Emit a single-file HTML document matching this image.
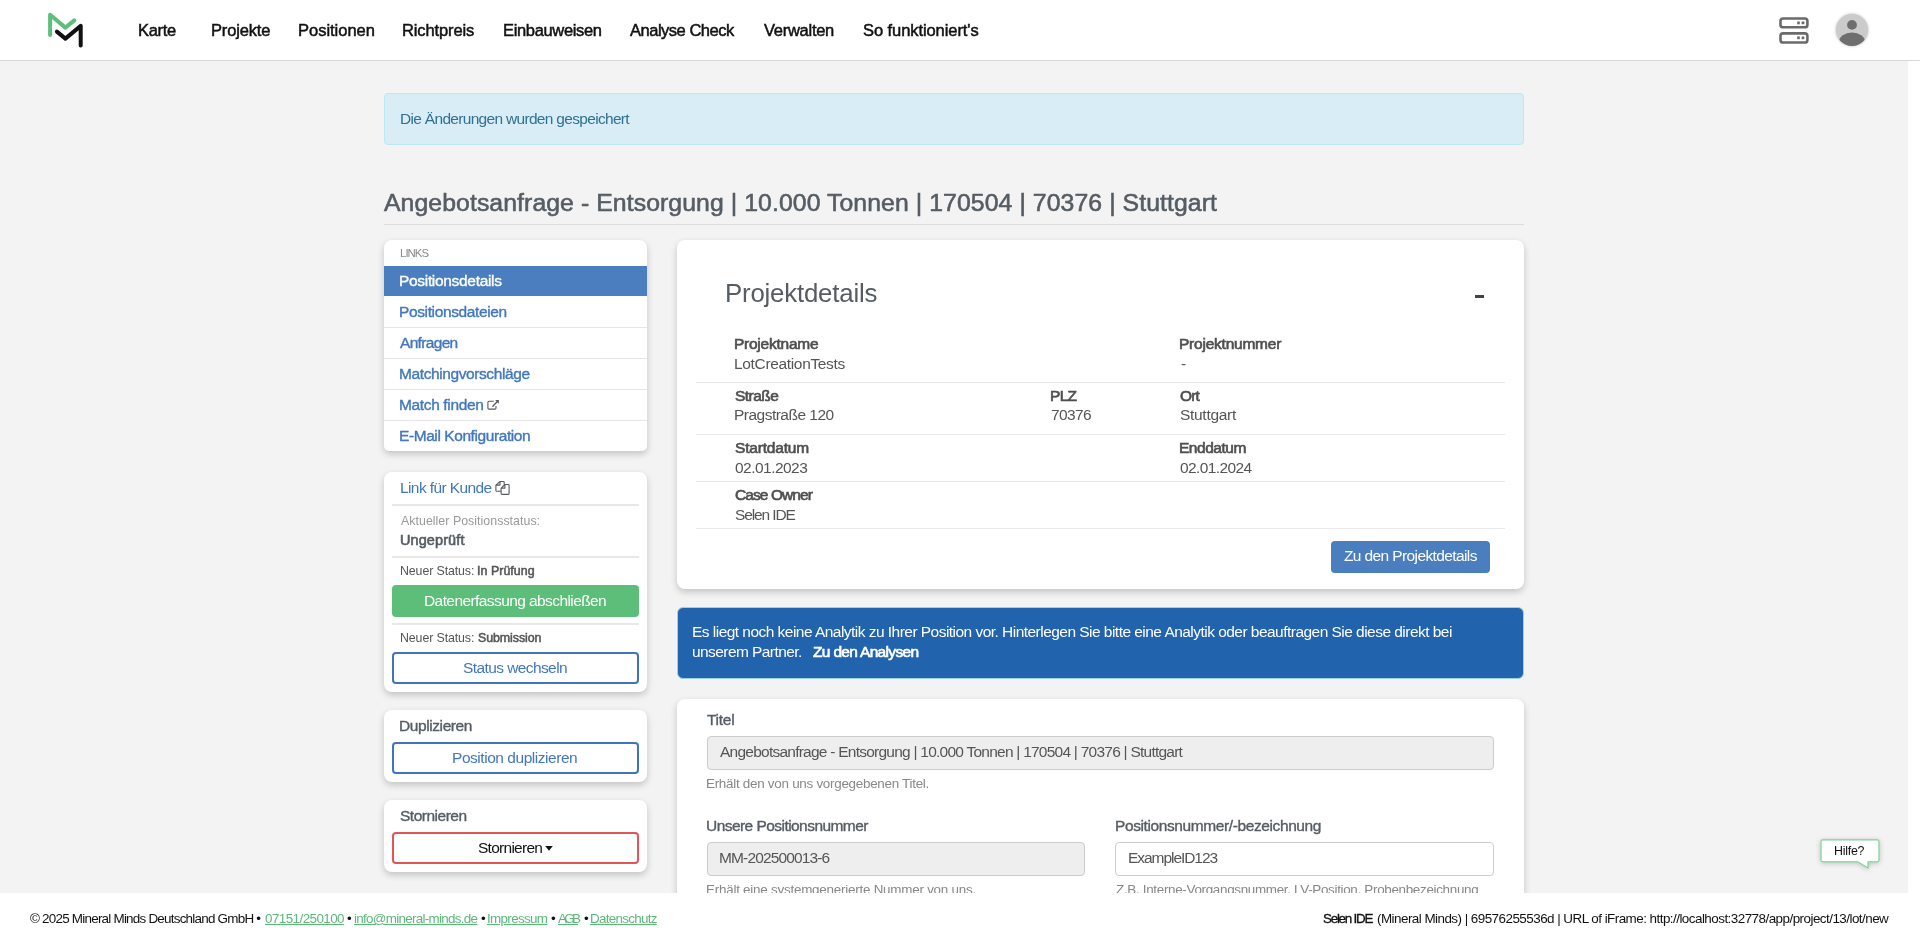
<!DOCTYPE html>
<html><head><meta charset="utf-8"><title>Position</title>
<style>
html,body{margin:0;padding:0;}
body{width:1920px;height:943px;overflow:hidden;position:relative;background:#fff;font-family:'Liberation Sans',sans-serif;}
.a{position:absolute;box-sizing:border-box;}
.t{position:absolute;white-space:nowrap;line-height:1;font-family:"Liberation Sans",sans-serif;will-change:transform;}
.card{position:absolute;background:#fff;border-radius:8px;box-shadow:0 3px 7px rgba(0,0,0,.2);}
.sep{position:absolute;height:1px;background:#e6e6e6;}
</style></head><body>
<!-- page background -->
<div class="a" style="left:0;top:61px;width:1908px;height:832px;background:#f3f3f3"></div>
<!-- header -->
<div class="a" style="left:0;top:0;width:1920px;height:60px;background:#fff"></div>
<div class="a" style="left:0;top:60px;width:1920px;height:1px;background:#d8d8d8"></div>
<svg class="a" style="left:40px;top:5px" width="50" height="50" viewBox="40 5 50 50">
  <polyline points="50.1,34.9 50.1,14.7 65.4,27.6 74.3,20.4" fill="none" stroke="#5dbf7b" stroke-width="4" stroke-linecap="round" stroke-linejoin="round"/>
  <polyline points="56.9,31.6 65.4,38.6 80.7,25.9 80.7,45.6" fill="none" stroke="#111" stroke-width="4" stroke-linecap="round" stroke-linejoin="round"/>
</svg>
<!-- server icon -->
<svg class="a" style="left:1775px;top:12px" width="40" height="36" viewBox="1775 12 40 36">
  <rect x="1780.5" y="18.5" width="26.9" height="8.8" rx="2.6" fill="none" stroke="#6b6b6b" stroke-width="2.6"/>
  <rect x="1780.5" y="33.4" width="26.9" height="9.1" rx="2.6" fill="none" stroke="#6b6b6b" stroke-width="2.6"/>
  <rect x="1797.2" y="21.5" width="2.6" height="2.8" fill="#6b6b6b"/>
  <rect x="1801.6" y="21.5" width="2.8" height="2.8" rx=".6" fill="#6b6b6b"/>
  <rect x="1797.2" y="36.4" width="2.6" height="2.8" fill="#6b6b6b"/>
  <rect x="1801.6" y="36.4" width="2.8" height="2.8" rx=".6" fill="#6b6b6b"/>
</svg>
<!-- avatar -->
<div class="a" style="left:1836px;top:14px;width:32px;height:32px;border-radius:50%;box-shadow:0 0 3px rgba(0,0,0,.3);overflow:hidden;background:#cbcbcb">
  <svg width="32" height="32" viewBox="1836 14 32 32" style="display:block">
    <circle cx="1852" cy="24.9" r="4.9" fill="#6e6e6e"/>
    <ellipse cx="1852" cy="41.5" rx="13" ry="9" fill="#6e6e6e"/>
  </svg>
</div>

<!-- alert -->
<div class="a" style="left:384px;top:93px;width:1140px;height:52px;background:#d9edf7;border:1px solid #bce8f1;border-radius:4px"></div>
<!-- title line -->
<div class="a" style="left:384px;top:224px;width:1140px;height:1px;background:#dcdcdc"></div>

<!-- links card -->
<div class="card" style="left:384px;top:240px;width:263px;height:211px;border-radius:8px 8px 5px 5px"></div>
<div class="a" style="left:384px;top:266px;width:263px;height:30px;background:#4a7ebe"></div>
<div class="sep" style="left:384px;top:327px;width:263px"></div>
<div class="sep" style="left:384px;top:358px;width:263px"></div>
<div class="sep" style="left:384px;top:389px;width:263px"></div>
<div class="sep" style="left:384px;top:420px;width:263px"></div>
<svg class="a" style="left:485px;top:398px" width="16" height="14" viewBox="485 398 16 14">
  <path d="M493.8,401.2 H489 Q487.9,401.2 487.9,402.3 V408 Q487.9,409.1 489,409.1 H494.9 Q496,409.1 496,408 V406" fill="none" stroke="#555b61" stroke-width="1.1"/>
  <path d="M492.8,406.2 L497.6,401.2" fill="none" stroke="#555b61" stroke-width="1.3" stroke-linecap="round"/>
  <path d="M495.2,400 L498.9,399.9 L498.7,403.7 Z" fill="#555b61"/>
</svg>

<!-- status card -->
<div class="card" style="left:384px;top:472px;width:263px;height:220px"></div>
<svg class="a" style="left:493px;top:479px" width="20" height="18" viewBox="493 479 20 18">
  <path d="M500,481.5 H503.3 Q504.2,481.5 504.2,482.4 V484.5 M500,481.5 L495.9,485.1 V490.4 Q495.9,491.3 496.8,491.3 H501 M500,481.5 V485.1 H495.9" fill="none" stroke="#555b61" stroke-width="1.1" stroke-linejoin="round"/>
  <path d="M504.9,484.5 H508.2 Q509.1,484.5 509.1,485.4 V493.5 Q509.1,494.4 508.2,494.4 H502 Q501.1,494.4 501.1,493.5 V488.1 L504.9,484.5 V488.1 H501.1" fill="#fff" stroke="#555b61" stroke-width="1.1" stroke-linejoin="round"/>
</svg>
<div class="a" style="left:392px;top:504px;width:247px;height:2px;background:#e8e8e8"></div>
<div class="a" style="left:392px;top:556px;width:247px;height:2px;background:#e8e8e8"></div>
<div class="a" style="left:392px;top:585px;width:247px;height:32px;background:#5cbe78;border-radius:4px"></div>
<div class="a" style="left:392px;top:623px;width:247px;height:2px;background:#e8e8e8"></div>
<div class="a" style="left:392px;top:652px;width:247px;height:32px;border:2px solid #3f74bf;border-radius:4px;background:#fff"></div>

<!-- dup card -->
<div class="card" style="left:384px;top:710px;width:263px;height:72px"></div>
<div class="a" style="left:392px;top:742px;width:247px;height:32px;border:2px solid #3f74bf;border-radius:4px;background:#fff"></div>
<!-- storno card -->
<div class="card" style="left:384px;top:800px;width:263px;height:72px"></div>
<div class="a" style="left:392px;top:832px;width:247px;height:32px;border:2px solid #e25555;border-radius:4px;background:#fff"></div>
<svg class="a" style="left:544px;top:845px" width="10" height="7" viewBox="544 845 10 7"><path d="M545.2,846 H552.8 L549,850.8 Z" fill="#111"/></svg>

<!-- projektdetails card -->
<div class="card" style="left:677px;top:240px;width:847px;height:349px"></div>
<div class="a" style="left:1475px;top:295px;width:8.5px;height:3px;background:#444"></div>
<div class="sep" style="left:696px;top:382px;width:809px;background:#e8e8e8"></div>
<div class="sep" style="left:696px;top:434px;width:809px;background:#e8e8e8"></div>
<div class="sep" style="left:696px;top:481px;width:809px;background:#e8e8e8"></div>
<div class="sep" style="left:696px;top:528px;width:809px;background:#e8e8e8"></div>
<div class="a" style="left:1331px;top:541px;width:159px;height:32px;background:#4a7ebe;border-radius:4px"></div>

<!-- blue alert -->
<div class="a" style="left:677px;top:607px;width:847px;height:72px;background:#2263ad;border:1px solid #9fd0ea;border-radius:6px"></div>

<!-- form card -->
<div class="card" style="left:677px;top:699px;width:847px;height:260px"></div>
<div class="a" style="left:707px;top:736px;width:787px;height:34px;background:#eee;border:1px solid #ccc;border-radius:4px"></div>
<div class="a" style="left:707px;top:842px;width:378px;height:34px;background:#eee;border:1px solid #ccc;border-radius:4px"></div>
<div class="a" style="left:1115px;top:842px;width:379px;height:34px;background:#fff;border:1px solid #ccc;border-radius:4px"></div>

<!-- hilfe bubble -->
<svg class="a" style="left:1810px;top:830px;overflow:visible" width="80" height="45" viewBox="1810 830 80 45">
  <defs><filter id="sh" x="-30%" y="-50%" width="160%" height="200%"><feDropShadow dx="0" dy="1" stdDeviation="2.5" flood-color="#000" flood-opacity=".22"/></filter></defs>
  <path d="M1822.8,839.8 H1877.2 Q1879,839.8 1879,841.6 V860 Q1879,861.8 1877.2,861.8 H1868 V868 L1857.7,861.8 H1822.8 Q1821,861.8 1821,860 V841.6 Q1821,839.8 1822.8,839.8 Z" fill="#fff" stroke="#7fcf97" stroke-width="1.2" filter="url(#sh)"/>
</svg>

<!-- footer -->
<div class="a" style="left:0;top:893px;width:1920px;height:50px;background:#fff;z-index:5"></div>

<div class="t" style="left:137.75px;top:23.31px;font-size:16.53px;font-weight:normal;color:#111;-webkit-text-stroke:0.40px #111;letter-spacing:-0.310px;-webkit-text-stroke:0.5px #111">Karte</div>
<div class="t" style="left:210.70px;top:23.31px;font-size:16.53px;font-weight:normal;color:#111;-webkit-text-stroke:0.40px #111;letter-spacing:-0.157px;-webkit-text-stroke:0.5px #111">Projekte</div>
<div class="t" style="left:297.90px;top:23.31px;font-size:16.53px;font-weight:normal;color:#111;-webkit-text-stroke:0.40px #111;letter-spacing:-0.027px;-webkit-text-stroke:0.5px #111">Positionen</div>
<div class="t" style="left:402.40px;top:23.31px;font-size:16.53px;font-weight:normal;color:#111;-webkit-text-stroke:0.40px #111;letter-spacing:-0.130px;-webkit-text-stroke:0.5px #111">Richtpreis</div>
<div class="t" style="left:502.60px;top:23.31px;font-size:16.53px;font-weight:normal;color:#111;-webkit-text-stroke:0.40px #111;letter-spacing:-0.350px;-webkit-text-stroke:0.5px #111">Einbauweisen</div>
<div class="t" style="left:630.00px;top:23.31px;font-size:16.53px;font-weight:normal;color:#111;-webkit-text-stroke:0.40px #111;letter-spacing:-0.492px;-webkit-text-stroke:0.5px #111">Analyse Check</div>
<div class="t" style="left:764.20px;top:23.31px;font-size:16.53px;font-weight:normal;color:#111;-webkit-text-stroke:0.40px #111;letter-spacing:-0.281px;-webkit-text-stroke:0.5px #111">Verwalten</div>
<div class="t" style="left:863.40px;top:23.31px;font-size:16.53px;font-weight:normal;color:#111;-webkit-text-stroke:0.40px #111;letter-spacing:-0.083px;-webkit-text-stroke:0.5px #111">So funktioniert's</div>
<div class="t" style="left:399.70px;top:111.19px;font-size:15.49px;font-weight:normal;color:#31708f;letter-spacing:-0.680px;">Die Änderungen wurden gespeichert</div>
<div class="t" style="left:384.30px;top:191.32px;font-size:24.79px;font-weight:normal;color:#555c63;-webkit-text-stroke:0.59px #555c63;letter-spacing:0.080px;">Angebotsanfrage - Entsorgung | 10.000 Tonnen | 170504 | 70376 | Stuttgart</div>
<div class="t" style="left:399.80px;top:247.68px;font-size:11.36px;font-weight:normal;color:#888;letter-spacing:-0.938px;">LINKS</div>
<div class="t" style="left:398.50px;top:273.19px;font-size:15.49px;font-weight:normal;color:#fff;-webkit-text-stroke:0.37px #fff;letter-spacing:-0.310px;">Positionsdetails</div>
<div class="t" style="left:398.50px;top:304.19px;font-size:15.49px;font-weight:normal;color:#4177bf;-webkit-text-stroke:0.37px #4177bf;letter-spacing:-0.361px;">Positionsdateien</div>
<div class="t" style="left:399.50px;top:335.19px;font-size:15.49px;font-weight:normal;color:#4177bf;-webkit-text-stroke:0.37px #4177bf;letter-spacing:-0.662px;">Anfragen</div>
<div class="t" style="left:398.50px;top:366.19px;font-size:15.49px;font-weight:normal;color:#4177bf;-webkit-text-stroke:0.37px #4177bf;letter-spacing:-0.394px;">Matchingvorschläge</div>
<div class="t" style="left:398.50px;top:397.19px;font-size:15.49px;font-weight:normal;color:#4177bf;-webkit-text-stroke:0.37px #4177bf;letter-spacing:-0.350px;">Match finden</div>
<div class="t" style="left:398.50px;top:428.19px;font-size:15.49px;font-weight:normal;color:#4177bf;-webkit-text-stroke:0.37px #4177bf;letter-spacing:-0.411px;">E-Mail Konfiguration</div>
<div class="t" style="left:399.60px;top:480.19px;font-size:15.49px;font-weight:normal;color:#4177bf;letter-spacing:-0.596px;">Link für Kunde</div>
<div class="t" style="left:400.60px;top:514.80px;font-size:12.4px;font-weight:normal;color:#999;letter-spacing:0.025px;">Aktueller Positionsstatus:</div>
<div class="t" style="left:399.60px;top:533.06px;font-size:14.46px;font-weight:normal;color:#555c63;-webkit-text-stroke:0.61px #555c63;letter-spacing:0.118px;">Ungeprüft</div>
<div class="t" style="left:399.60px;top:564.80px;font-size:12.4px;font-weight:normal;color:#555;letter-spacing:-0.118px;">Neuer Status:</div>
<div class="t" style="left:476.50px;top:564.80px;font-size:12.4px;font-weight:normal;color:#555;-webkit-text-stroke:0.52px #555;letter-spacing:0.046px;">In Prüfung</div>
<div class="t" style="left:423.50px;top:593.19px;font-size:15.49px;font-weight:normal;color:#fff;letter-spacing:-0.576px;">Datenerfassung abschließen</div>
<div class="t" style="left:399.60px;top:631.80px;font-size:12.4px;font-weight:normal;color:#555;letter-spacing:-0.118px;">Neuer Status:</div>
<div class="t" style="left:477.50px;top:631.80px;font-size:12.4px;font-weight:normal;color:#555;-webkit-text-stroke:0.52px #555;letter-spacing:-0.073px;">Submission</div>
<div class="t" style="left:463.10px;top:660.19px;font-size:15.49px;font-weight:normal;color:#4177bf;letter-spacing:-0.582px;">Status wechseln</div>
<div class="t" style="left:399.40px;top:718.19px;font-size:15.49px;font-weight:normal;color:#555c63;-webkit-text-stroke:0.37px #555c63;letter-spacing:-0.405px;">Duplizieren</div>
<div class="t" style="left:452.10px;top:750.19px;font-size:15.49px;font-weight:normal;color:#4177bf;letter-spacing:-0.451px;">Position duplizieren</div>
<div class="t" style="left:400.40px;top:808.19px;font-size:15.49px;font-weight:normal;color:#555c63;-webkit-text-stroke:0.37px #555c63;letter-spacing:-0.481px;">Stornieren</div>
<div class="t" style="left:478.00px;top:840.19px;font-size:15.49px;font-weight:normal;color:#111;letter-spacing:-0.726px;">Stornieren</div>
<div class="t" style="left:724.50px;top:281.44px;font-size:25.82px;font-weight:normal;color:#555c63;letter-spacing:-0.196px;">Projektdetails</div>
<div class="t" style="left:733.80px;top:336.19px;font-size:15.49px;font-weight:normal;color:#4f4f4f;-webkit-text-stroke:0.65px #4f4f4f;letter-spacing:-0.241px;">Projektname</div>
<div class="t" style="left:733.80px;top:356.19px;font-size:15.49px;font-weight:normal;color:#555;letter-spacing:-0.330px;">LotCreationTests</div>
<div class="t" style="left:1179.30px;top:336.19px;font-size:15.49px;font-weight:normal;color:#4f4f4f;-webkit-text-stroke:0.65px #4f4f4f;letter-spacing:-0.219px;">Projektnummer</div>
<div class="t" style="left:1180.50px;top:356.19px;font-size:15.49px;font-weight:normal;color:#555;">-</div>
<div class="t" style="left:734.80px;top:388.19px;font-size:15.49px;font-weight:normal;color:#4f4f4f;-webkit-text-stroke:0.65px #4f4f4f;letter-spacing:-0.531px;">Straße</div>
<div class="t" style="left:733.80px;top:407.19px;font-size:15.49px;font-weight:normal;color:#555;letter-spacing:-0.509px;">Pragstraße 120</div>
<div class="t" style="left:1049.50px;top:388.19px;font-size:15.49px;font-weight:normal;color:#4f4f4f;-webkit-text-stroke:0.65px #4f4f4f;letter-spacing:-0.670px;">PLZ</div>
<div class="t" style="left:1050.50px;top:407.19px;font-size:15.49px;font-weight:normal;color:#555;letter-spacing:-0.637px;">70376</div>
<div class="t" style="left:1180.30px;top:388.19px;font-size:15.49px;font-weight:normal;color:#4f4f4f;-webkit-text-stroke:0.65px #4f4f4f;letter-spacing:-0.900px;">Ort</div>
<div class="t" style="left:1180.30px;top:407.19px;font-size:15.49px;font-weight:normal;color:#555;letter-spacing:-0.291px;">Stuttgart</div>
<div class="t" style="left:734.80px;top:440.19px;font-size:15.49px;font-weight:normal;color:#4f4f4f;-webkit-text-stroke:0.65px #4f4f4f;letter-spacing:-0.171px;">Startdatum</div>
<div class="t" style="left:734.80px;top:460.19px;font-size:15.49px;font-weight:normal;color:#555;letter-spacing:-0.521px;">02.01.2023</div>
<div class="t" style="left:1179.30px;top:440.19px;font-size:15.49px;font-weight:normal;color:#4f4f4f;-webkit-text-stroke:0.65px #4f4f4f;letter-spacing:-0.455px;">Enddatum</div>
<div class="t" style="left:1180.30px;top:460.19px;font-size:15.49px;font-weight:normal;color:#555;letter-spacing:-0.587px;">02.01.2024</div>
<div class="t" style="left:734.80px;top:487.19px;font-size:15.49px;font-weight:normal;color:#4f4f4f;-webkit-text-stroke:0.65px #4f4f4f;letter-spacing:-0.911px;">Case Owner</div>
<div class="t" style="left:734.80px;top:507.19px;font-size:15.49px;font-weight:normal;color:#555;letter-spacing:-1.099px;">Selen IDE</div>
<div class="t" style="left:1343.60px;top:548.19px;font-size:15.49px;font-weight:normal;color:#fff;letter-spacing:-0.601px;">Zu den Projektdetails</div>
<div class="t" style="left:691.70px;top:624.19px;font-size:15.49px;font-weight:normal;color:#fff;letter-spacing:-0.525px;">Es liegt noch keine Analytik zu Ihrer Position vor. Hinterlegen Sie bitte eine Analytik oder beauftragen Sie diese direkt bei</div>
<div class="t" style="left:691.70px;top:644.19px;font-size:15.49px;font-weight:normal;color:#fff;letter-spacing:-0.565px;">unserem Partner.</div>
<div class="t" style="left:812.90px;top:644.19px;font-size:15.49px;font-weight:normal;color:#fff;-webkit-text-stroke:0.65px #fff;letter-spacing:-0.664px;">Zu den Analysen</div>
<div class="t" style="left:707.20px;top:712.19px;font-size:15.49px;font-weight:normal;color:#555c63;-webkit-text-stroke:0.37px #555c63;letter-spacing:-0.259px;">Titel</div>
<div class="t" style="left:720.10px;top:744.19px;font-size:15.49px;font-weight:normal;color:#555;letter-spacing:-0.749px;">Angebotsanfrage - Entsorgung | 10.000 Tonnen | 170504 | 70376 | Stuttgart</div>
<div class="t" style="left:706.20px;top:776.93px;font-size:13.43px;font-weight:normal;color:#888;letter-spacing:-0.277px;">Erhält den von uns vorgegebenen Titel.</div>
<div class="t" style="left:706.00px;top:818.19px;font-size:15.49px;font-weight:normal;color:#555c63;-webkit-text-stroke:0.37px #555c63;letter-spacing:-0.542px;">Unsere Positionsnummer</div>
<div class="t" style="left:719.00px;top:850.19px;font-size:15.49px;font-weight:normal;color:#555;letter-spacing:-0.847px;">MM-202500013-6</div>
<div class="t" style="left:706.00px;top:882.93px;font-size:13.43px;font-weight:normal;color:#888;letter-spacing:-0.239px;">Erhält eine systemgenerierte Nummer von uns.</div>
<div class="t" style="left:1114.80px;top:818.19px;font-size:15.49px;font-weight:normal;color:#555c63;-webkit-text-stroke:0.37px #555c63;letter-spacing:-0.388px;">Positionsnummer/-bezeichnung</div>
<div class="t" style="left:1128.00px;top:850.19px;font-size:15.49px;font-weight:normal;color:#555;letter-spacing:-1.041px;">ExampleID123</div>
<div class="t" style="left:1115.80px;top:882.93px;font-size:13.43px;font-weight:normal;color:#888;letter-spacing:-0.316px;">Z.B. Interne-Vorgangsnummer, LV-Position, Probenbezeichnung</div>
<div class="t" style="left:1834.30px;top:844.80px;font-size:12.4px;font-weight:normal;color:#111;letter-spacing:-0.237px;">Hilfe?</div>
<div class="t" style="left:29.90px;top:911.93px;font-size:13.43px;font-weight:normal;color:#111;letter-spacing:-0.764px;z-index:6">© 2025 Mineral Minds Deutschland GmbH •</div>
<div class="t" style="left:264.70px;top:911.93px;font-size:13.43px;font-weight:normal;color:#5cb878;letter-spacing:-0.570px;text-decoration:underline;z-index:6">07151/250100</div>
<div class="t" style="left:347.00px;top:911.93px;font-size:13.43px;font-weight:normal;color:#111;z-index:6">•</div>
<div class="t" style="left:354.00px;top:911.93px;font-size:13.43px;font-weight:normal;color:#5cb878;letter-spacing:-0.707px;text-decoration:underline;z-index:6">info@mineral-minds.de</div>
<div class="t" style="left:481.00px;top:911.93px;font-size:13.43px;font-weight:normal;color:#111;z-index:6">•</div>
<div class="t" style="left:486.80px;top:911.93px;font-size:13.43px;font-weight:normal;color:#5cb878;letter-spacing:-0.674px;text-decoration:underline;z-index:6">Impressum</div>
<div class="t" style="left:551.00px;top:911.93px;font-size:13.43px;font-weight:normal;color:#111;z-index:6">•</div>
<div class="t" style="left:557.80px;top:911.93px;font-size:13.43px;font-weight:normal;color:#5cb878;letter-spacing:-2.746px;text-decoration:underline;z-index:6">AGB</div>
<div class="t" style="left:584.00px;top:911.93px;font-size:13.43px;font-weight:normal;color:#111;z-index:6">•</div>
<div class="t" style="left:590.30px;top:911.93px;font-size:13.43px;font-weight:normal;color:#5cb878;letter-spacing:-0.720px;text-decoration:underline;z-index:6">Datenschutz</div>
<div class="t" style="left:1323.20px;top:911.93px;font-size:13.43px;font-weight:normal;color:#111;-webkit-text-stroke:0.32px #111;letter-spacing:-1.260px;z-index:6">Selen IDE</div>
<div class="t" style="left:1377.00px;top:911.93px;font-size:13.43px;font-weight:normal;color:#111;letter-spacing:-0.533px;z-index:6">(Mineral Minds) | 69576255536d | URL of iFrame: http://localhost:32778/app/project/13/lot/new</div>
</body></html>
